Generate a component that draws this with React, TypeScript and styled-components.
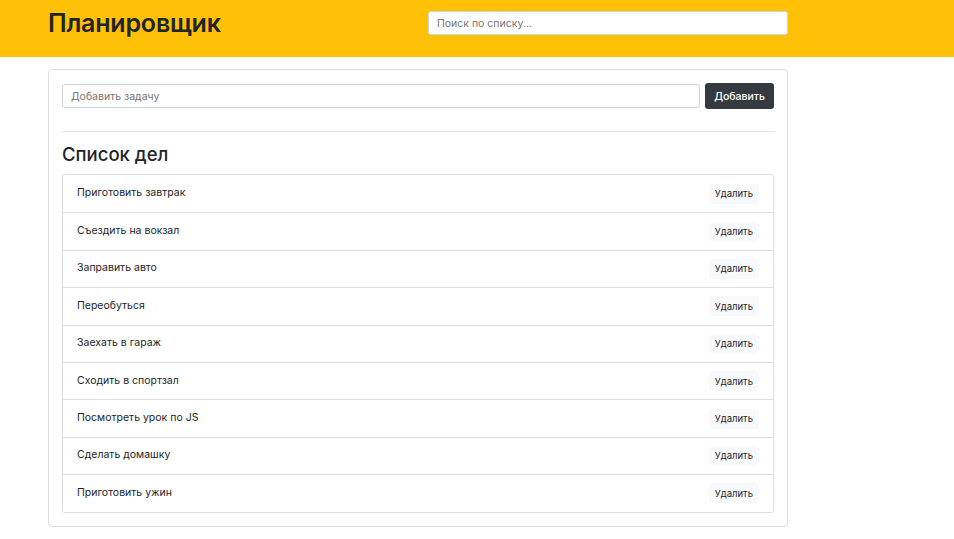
import React from 'react'
import styled, { createGlobalStyle } from 'styled-components'

const GlobalStyle = createGlobalStyle`
  body {
    margin: 0;
    background: #fff;
    font-family: 'Inter', 'Liberation Sans', sans-serif;
    color: #212529;
  }
  * { box-sizing: border-box; }
`

const Header = styled.header`
  background: #ffc107;
  height: 57px;
  padding: 0 48px 11px;
  display: flex;
  align-items: center;
`

const HeaderInner = styled.div`
  width: 740px;
  display: grid;
  grid-template-columns: 380px 360px;
  align-items: center;
`

const Title = styled.h1`
  margin: 0;
  font-size: 25px;
  font-weight: 600;
  letter-spacing: -0.2px;
  color: #212529;
`

const Input = styled.input`
  height: 24px;
  border: 1px solid #ced4da;
  border-radius: 3px;
  padding: 0 8px;
  font-family: inherit;
  font-size: 10.5px;
  color: #495057;
  background: #fff;
  outline: none;
  width: 100%;

  ::placeholder {
    color: #6c757d;
  }
`

const Main = styled.main`
  padding: 12px 48px 20px;
`

const Card = styled.div`
  width: 740px;
  border: 1px solid #dfdfdf;
  border-radius: 4px;
  padding: 13px 13px 13px;
`

const AddRow = styled.form`
  display: flex;
  align-items: center;
  gap: 5px;
`

const DarkButton = styled.button`
  height: 26px;
  padding: 0 9px;
  background: #343a40;
  color: #fff;
  border: none;
  border-radius: 3px;
  font-family: inherit;
  font-size: 10.5px;
  font-weight: 500;
  white-space: nowrap;
`

const Divider = styled.hr`
  border: none;
  border-top: 1px solid #e2e2e2;
  margin: 22px 0 11px;
`

const ListTitle = styled.h2`
  margin: 0 0 9px;
  font-size: 18.5px;
  font-weight: 500;
`

const List = styled.ul`
  list-style: none;
  margin: 0;
  padding: 0;
  border: 1px solid #dfdfdf;
  border-radius: 3px;
`

const Item = styled.li`
  height: 37.4px;
  display: flex;
  align-items: center;
  justify-content: space-between;
  padding: 0 14px 0 14px;
  font-size: 10.5px;
  border-top: 1px solid #dfdfdf;

  &:first-child {
    border-top: none;
  }
`

const TaskText = styled.span`
  margin-bottom: 2px;
`

const LightButton = styled.button`
  height: 20px;
  padding: 0 6px;
  background: #f8f9fa;
  border: none;
  border-radius: 3px;
  font-family: inherit;
  font-size: 9.5px;
  color: #212529;
`

const tasks = [
  'Приготовить завтрак',
  'Съездить на вокзал',
  'Заправить авто',
  'Переобуться',
  'Заехать в гараж',
  'Сходить в спортзал',
  'Посмотреть урок по JS',
  'Сделать домашку',
  'Приготовить ужин',
]

const App: React.FC = () => {
  return (
    <>
      <GlobalStyle />
      <Header>
        <HeaderInner>
          <Title>Планировщик</Title>
          <Input placeholder="Поиск по списку..." />
        </HeaderInner>
      </Header>
      <Main>
        <Card>
          <AddRow onSubmit={e => e.preventDefault()}>
            <Input placeholder="Добавить задачу" />
            <DarkButton type="submit">Добавить</DarkButton>
          </AddRow>
          <Divider />
          <ListTitle>Список дел</ListTitle>
          <List>
            {tasks.map(task => (
              <Item key={task}>
                <TaskText>{task}</TaskText>
                <LightButton>Удалить</LightButton>
              </Item>
            ))}
          </List>
        </Card>
      </Main>
    </>
  )
}

export default App
